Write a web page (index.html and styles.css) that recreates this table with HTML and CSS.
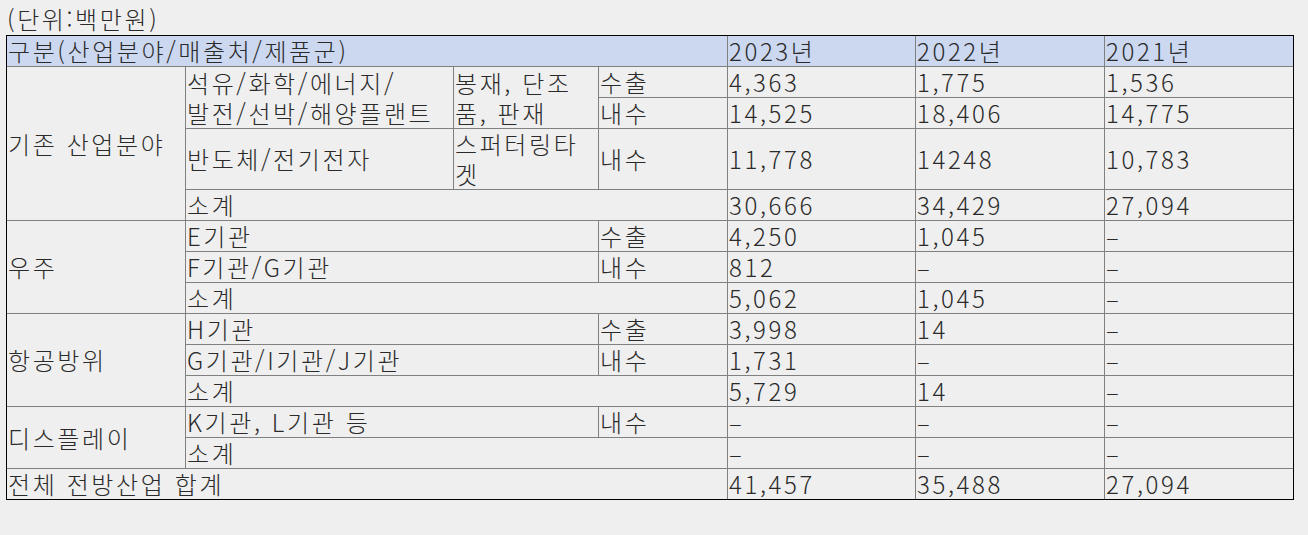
FILE: index.html
```html
<!DOCTYPE html>
<html lang="ko">
<head>
<meta charset="utf-8">
<title>전방산업 매출</title>
<link rel="stylesheet" href="styles.css">
</head>
<body>
<div class="unit">(단위:백만원)</div>
<table class="sales">
  <colgroup>
    <col class="c-cat">
    <col class="c-field">
    <col class="c-prod">
    <col class="c-type">
    <col class="c-year">
    <col class="c-year2">
    <col class="c-year">
  </colgroup>
  <tr class="head">
    <td colspan="4">구분(산업분야/매출처/제품군)</td>
    <td>2023년</td>
    <td>2022년</td>
    <td class="last">2021년</td>
  </tr>
  <tr>
    <td rowspan="4">기존 산업분야</td>
    <td rowspan="2" class="two">석유/화학/에너지/<br>발전/선박/해양플랜트</td>
    <td rowspan="2" class="two">봉재, 단조<br>품, 판재</td>
    <td>수출</td>
    <td>4,363</td>
    <td>1,775</td>
    <td class="last">1,536</td>
  </tr>
  <tr>
    <td>내수</td>
    <td>14,525</td>
    <td>18,406</td>
    <td class="last">14,775</td>
  </tr>
  <tr class="tall">
    <td>반도체/전기전자</td>
    <td class="two">스퍼터링타<br>겟</td>
    <td>내수</td>
    <td>11,778</td>
    <td>14248</td>
    <td class="last">10,783</td>
  </tr>
  <tr>
    <td colspan="3">소계</td>
    <td>30,666</td>
    <td>34,429</td>
    <td class="last">27,094</td>
  </tr>
  <tr>
    <td rowspan="3">우주</td>
    <td colspan="2">E기관</td>
    <td>수출</td>
    <td>4,250</td>
    <td>1,045</td>
    <td class="last">–</td>
  </tr>
  <tr>
    <td colspan="2">F기관/G기관</td>
    <td>내수</td>
    <td>812</td>
    <td>–</td>
    <td class="last">–</td>
  </tr>
  <tr>
    <td colspan="3">소계</td>
    <td>5,062</td>
    <td>1,045</td>
    <td class="last">–</td>
  </tr>
  <tr>
    <td rowspan="3">항공방위</td>
    <td colspan="2">H기관</td>
    <td>수출</td>
    <td>3,998</td>
    <td>14</td>
    <td class="last">–</td>
  </tr>
  <tr>
    <td colspan="2">G기관/I기관/J기관</td>
    <td>내수</td>
    <td>1,731</td>
    <td>–</td>
    <td class="last">–</td>
  </tr>
  <tr>
    <td colspan="3">소계</td>
    <td>5,729</td>
    <td>14</td>
    <td class="last">–</td>
  </tr>
  <tr>
    <td rowspan="2">디스플레이</td>
    <td colspan="2">K기관, L기관 등</td>
    <td>내수</td>
    <td>–</td>
    <td>–</td>
    <td class="last">–</td>
  </tr>
  <tr>
    <td colspan="3">소계</td>
    <td>–</td>
    <td>–</td>
    <td class="last">–</td>
  </tr>
  <tr class="total">
    <td colspan="4">전체 전방산업 합계</td>
    <td>41,457</td>
    <td>35,488</td>
    <td class="last">27,094</td>
  </tr>
</table>
</body>
</html>
```

FILE: styles.css
```css
html, body {
  margin: 0;
  padding: 0;
  background: #efefef;
}

body {
  padding: 0 6px;
  font-family: "Noto Sans CJK KR", "Noto Sans", sans-serif;
  font-weight: 300;
  font-size: 24px;
  letter-spacing: 2.6px;
  color: #2a2a2a;
}

.unit {
  height: 35px;
  line-height: 38px;
  padding-left: 1px;
  box-sizing: border-box;
}

.sales {
  border-collapse: separate;
  border-spacing: 0;
  table-layout: fixed;
  width: 1288px;
  border: 1px solid #000;
}

.c-cat { width: 179px; }
.c-field { width: 268px; }
.c-prod { width: 145px; }
.c-type { width: 129px; }
.c-year { width: 188px; }
.c-year2 { width: 189px; }

.sales td {
  padding: 0 0 0 1px;
  height: 30px;
  line-height: 30px;
  border-right: 1px solid #808080;
  border-bottom: 1px solid #808080;
  vertical-align: middle;
  white-space: nowrap;
}

.sales td.last {
  border-right: none;
}

.sales tr.total td {
  border-bottom: none;
}

.sales tr.head td {
  background: #cbd8f0;
}

.sales tr.tall td {
  height: 60px;
}
```
